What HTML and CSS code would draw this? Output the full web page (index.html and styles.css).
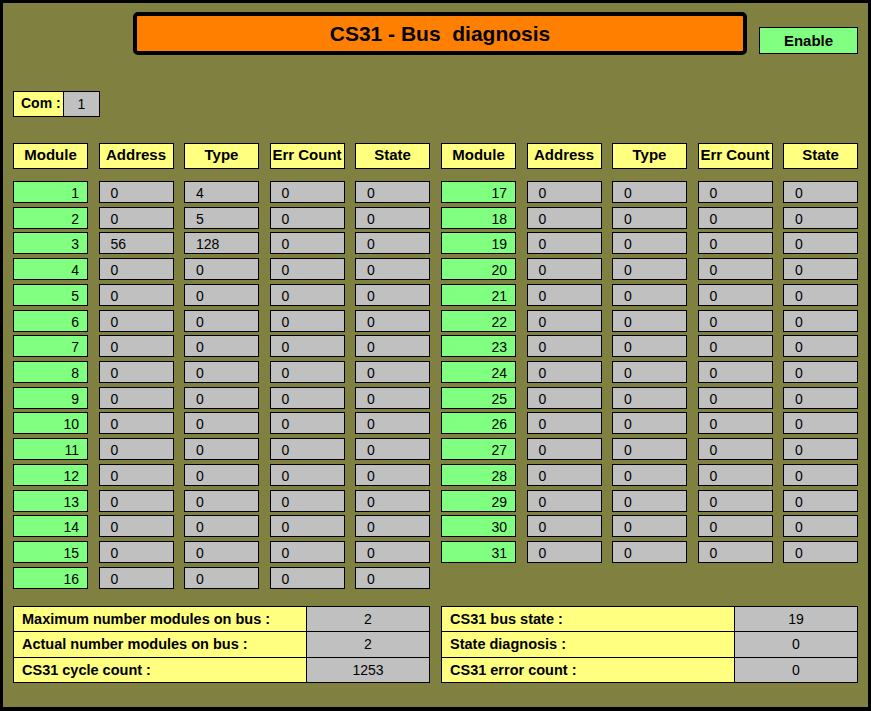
FILE: index.html
```html
<!DOCTYPE html>
<html>
<head>
<meta charset="utf-8">
<link rel="stylesheet" href="styles.css">
</head>
<body>
<div class="frame">
  <div class="top">
    <div class="title">CS31 - Bus&nbsp; diagnosis</div>
    <div class="enable">Enable</div>
  </div>
  <div class="com"><span class="com-label">Com :</span><span class="com-val">1</span></div>
  <div class="groups">
    <div class="group">
      <div class="hdr-row">
        <div class="hdr">Module</div><div class="hdr">Address</div><div class="hdr">Type</div><div class="hdr">Err Count</div><div class="hdr">State</div>
      </div>
      <div class="rows">
        <div class="mod">1</div><div class="val">0</div><div class="val">4</div><div class="val">0</div><div class="val">0</div>
        <div class="mod">2</div><div class="val">0</div><div class="val">5</div><div class="val">0</div><div class="val">0</div>
        <div class="mod">3</div><div class="val">56</div><div class="val">128</div><div class="val">0</div><div class="val">0</div>
        <div class="mod">4</div><div class="val">0</div><div class="val">0</div><div class="val">0</div><div class="val">0</div>
        <div class="mod">5</div><div class="val">0</div><div class="val">0</div><div class="val">0</div><div class="val">0</div>
        <div class="mod">6</div><div class="val">0</div><div class="val">0</div><div class="val">0</div><div class="val">0</div>
        <div class="mod">7</div><div class="val">0</div><div class="val">0</div><div class="val">0</div><div class="val">0</div>
        <div class="mod">8</div><div class="val">0</div><div class="val">0</div><div class="val">0</div><div class="val">0</div>
        <div class="mod">9</div><div class="val">0</div><div class="val">0</div><div class="val">0</div><div class="val">0</div>
        <div class="mod">10</div><div class="val">0</div><div class="val">0</div><div class="val">0</div><div class="val">0</div>
        <div class="mod">11</div><div class="val">0</div><div class="val">0</div><div class="val">0</div><div class="val">0</div>
        <div class="mod">12</div><div class="val">0</div><div class="val">0</div><div class="val">0</div><div class="val">0</div>
        <div class="mod">13</div><div class="val">0</div><div class="val">0</div><div class="val">0</div><div class="val">0</div>
        <div class="mod">14</div><div class="val">0</div><div class="val">0</div><div class="val">0</div><div class="val">0</div>
        <div class="mod">15</div><div class="val">0</div><div class="val">0</div><div class="val">0</div><div class="val">0</div>
        <div class="mod">16</div><div class="val">0</div><div class="val">0</div><div class="val">0</div><div class="val">0</div>
      </div>
    </div>
    <div class="group">
      <div class="hdr-row">
        <div class="hdr">Module</div><div class="hdr">Address</div><div class="hdr">Type</div><div class="hdr">Err Count</div><div class="hdr">State</div>
      </div>
      <div class="rows">
        <div class="mod">17</div><div class="val">0</div><div class="val">0</div><div class="val">0</div><div class="val">0</div>
        <div class="mod">18</div><div class="val">0</div><div class="val">0</div><div class="val">0</div><div class="val">0</div>
        <div class="mod">19</div><div class="val">0</div><div class="val">0</div><div class="val">0</div><div class="val">0</div>
        <div class="mod">20</div><div class="val">0</div><div class="val">0</div><div class="val">0</div><div class="val">0</div>
        <div class="mod">21</div><div class="val">0</div><div class="val">0</div><div class="val">0</div><div class="val">0</div>
        <div class="mod">22</div><div class="val">0</div><div class="val">0</div><div class="val">0</div><div class="val">0</div>
        <div class="mod">23</div><div class="val">0</div><div class="val">0</div><div class="val">0</div><div class="val">0</div>
        <div class="mod">24</div><div class="val">0</div><div class="val">0</div><div class="val">0</div><div class="val">0</div>
        <div class="mod">25</div><div class="val">0</div><div class="val">0</div><div class="val">0</div><div class="val">0</div>
        <div class="mod">26</div><div class="val">0</div><div class="val">0</div><div class="val">0</div><div class="val">0</div>
        <div class="mod">27</div><div class="val">0</div><div class="val">0</div><div class="val">0</div><div class="val">0</div>
        <div class="mod">28</div><div class="val">0</div><div class="val">0</div><div class="val">0</div><div class="val">0</div>
        <div class="mod">29</div><div class="val">0</div><div class="val">0</div><div class="val">0</div><div class="val">0</div>
        <div class="mod">30</div><div class="val">0</div><div class="val">0</div><div class="val">0</div><div class="val">0</div>
        <div class="mod">31</div><div class="val">0</div><div class="val">0</div><div class="val">0</div><div class="val">0</div>
      </div>
    </div>
  </div>
  <div class="sums">
    <div class="sum">
      <div class="sum-label">Maximum number modules on bus :</div><div class="sum-val">2</div>
      <div class="sum-label">Actual number modules on bus :</div><div class="sum-val">2</div>
      <div class="sum-label">CS31 cycle count :</div><div class="sum-val">1253</div>
    </div>
    <div class="sum">
      <div class="sum-label">CS31 bus state :</div><div class="sum-val">19</div>
      <div class="sum-label">State diagnosis :</div><div class="sum-val">0</div>
      <div class="sum-label">CS31 error count :</div><div class="sum-val">0</div>
    </div>
  </div>
</div>
</body>
</html>
```

FILE: styles.css
```css
html, body {
  margin: 0;
  padding: 0;
  background: #000;
}
.frame {
  width: 871px;
  height: 711px;
  box-sizing: border-box;
  border: 3px solid #000;
  border-bottom-width: 4px;
  background: #808040;
  padding: 0 10px;
  font-family: "Liberation Sans", Arial, sans-serif;
  color: #000;
}
.top {
  display: flex;
  margin-top: 9px;
  height: 43px;
}
.title {
  margin-left: 120px;
  width: 614px;
  height: 43px;
  box-sizing: border-box;
  border: 4px solid #000;
  border-radius: 5px;
  background: #ff8000;
  display: flex;
  align-items: center;
  justify-content: center;
  font-size: 21px;
  font-weight: bold;
}
.enable {
  margin-left: 12px;
  margin-top: 15px;
  width: 99px;
  height: 27px;
  box-sizing: border-box;
  border: 1px solid #000;
  background: #80ff80;
  display: flex;
  align-items: center;
  justify-content: center;
  font-size: 15px;
  font-weight: bold;
}
.com {
  margin-top: 36px;
  display: flex;
  width: 87px;
  height: 26px;
  box-sizing: border-box;
  border: 1px solid #000;
}
.com-label {
  width: 49px;
  background: #ffff80;
  font-size: 14px;
  font-weight: bold;
  padding-left: 7px;
  box-sizing: border-box;
  line-height: 23px;
  white-space: nowrap;
}
.com-val {
  flex: 1;
  background: #c0c0c0;
  border-left: 1px solid #000;
  font-size: 14px;
  text-align: center;
  line-height: 24px;
}
.groups {
  margin-top: 26px;
  display: flex;
  gap: 11px;
  height: 446px;
}
.group {
  width: 417px;
  display: flex;
  flex-direction: column;
}
.hdr-row {
  display: grid;
  grid-template-columns: repeat(5, 75px);
  column-gap: 10.5px;
  margin-bottom: 12px;
}
.hdr {
  height: 26px;
  box-sizing: border-box;
  border: 1px solid #000;
  background: #ffff80;
  font-size: 15px;
  font-weight: bold;
  text-align: center;
  line-height: 22px;
  white-space: nowrap;
}
.rows {
  display: grid;
  grid-template-columns: repeat(5, 75px);
  grid-auto-rows: 22px;
  column-gap: 10.5px;
  row-gap: 3.733px;
}
.mod, .val {
  box-sizing: border-box;
  border: 1px solid #000;
  font-size: 14px;
  line-height: 18px;
  padding-top: 2px;
}
.mod {
  background: #80ff80;
  text-align: right;
  padding-right: 8px;
}
.val {
  background: #c0c0c0;
  padding-left: 11px;
}
.sums {
  margin-top: 17px;
  display: flex;
  gap: 11px;
}
.sum {
  width: 417px;
  height: 77px;
  box-sizing: border-box;
  border: 1px solid #000;
  background: #000;
  display: grid;
  grid-template-columns: 1fr 122px;
  grid-template-rows: repeat(3, 1fr);
  gap: 1px;
}
.sum-label {
  background: #ffff80;
  font-size: 14.5px;
  font-weight: bold;
  padding-left: 8px;
  display: flex;
  align-items: center;
  white-space: nowrap;
}
.sum-val {
  background: #c0c0c0;
  font-size: 14px;
  display: flex;
  align-items: center;
  justify-content: center;
}
```
